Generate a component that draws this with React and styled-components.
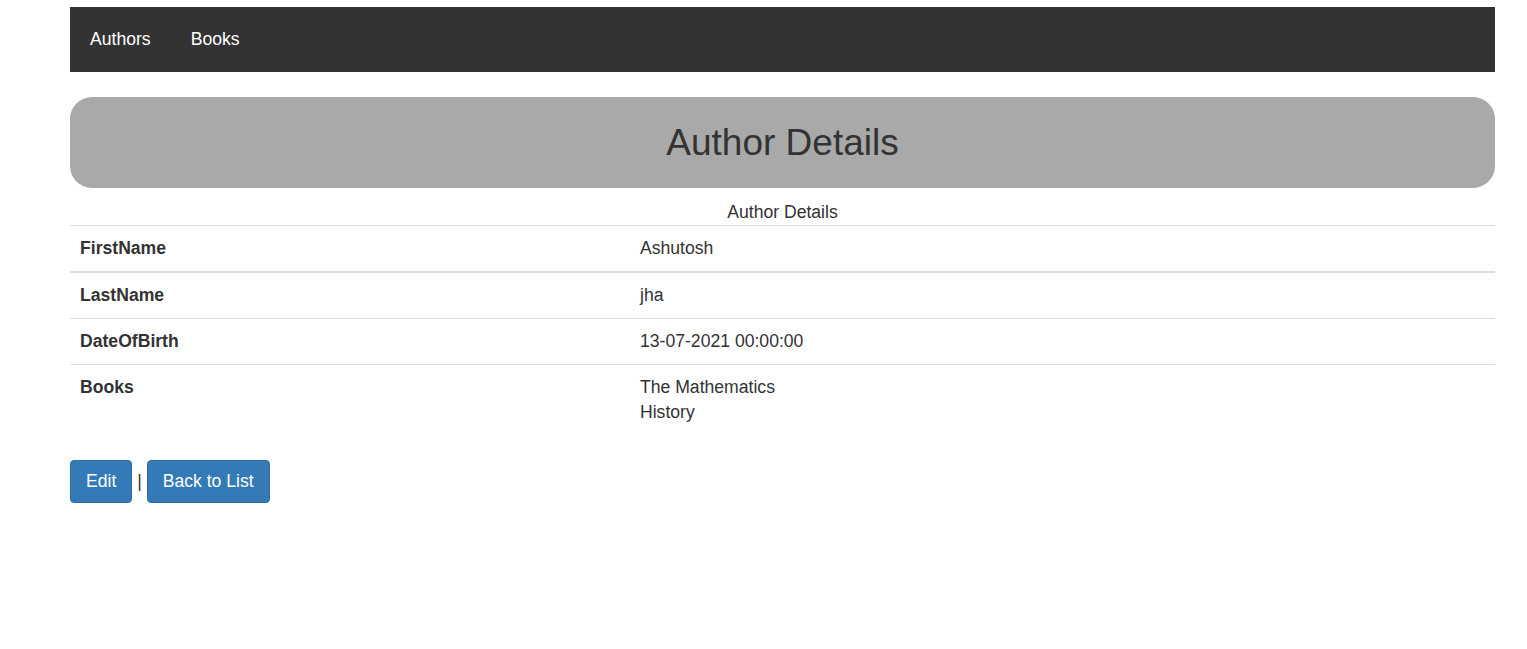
import React from "react";
import styled, { createGlobalStyle } from "styled-components";

const GlobalStyle = createGlobalStyle`
  body {
    margin: 0;
    background: #fff;
    font-family: "Liberation Sans", Arial, Helvetica, sans-serif;
    font-size: 17.6px;
    line-height: 25px;
    color: #333;
  }
`;

const Container = styled.div`
  width: 1425px;
  margin: 7px 0 0 70px;
`;

const Navbar = styled.nav`
  display: flex;
  background-color: #333;
  height: 65px;
`;

const NavLink = styled.a`
  display: block;
  padding: 20px;
  color: #fff;
  text-decoration: none;
  line-height: 25px;
`;

const PageHeader = styled.div`
  margin-top: 25px;
  background-color: #a9a9a9;
  border-radius: 22px;
  padding: 25px 0;
  text-align: center;
`;

const Title = styled.h1`
  margin: 0;
  font-size: 37px;
  font-weight: normal;
  line-height: 41px;
  color: #333;
`;

const Table = styled.table`
  width: 100%;
  border-collapse: collapse;
  margin-bottom: 25px;
`;

const Caption = styled.caption`
  padding: 12px 0 0;
  text-align: center;
  color: #333;
`;

const Row = styled.tr`
  border-top: 1px solid #ddd;
  border-bottom: ${(p) => (p.head ? "2px solid #ddd" : "none")};
`;

const Label = styled.th`
  width: 540px;
  padding: 10px;
  text-align: left;
  vertical-align: top;
  font-weight: bold;
`;

const Value = styled.td`
  padding: 10px;
  vertical-align: top;
`;

const Actions = styled.div`
  color: #333;
`;

const Button = styled.a`
  display: inline-block;
  padding: 8px 15px;
  line-height: 25px;
  color: #fff;
  background-color: #337ab7;
  border: 1px solid #2e6da4;
  border-radius: 4px;
  text-decoration: none;
`;

const details = [
  { label: "FirstName", value: ["Ashutosh"], head: true },
  { label: "LastName", value: ["jha"] },
  { label: "DateOfBirth", value: ["13-07-2021 00:00:00"] },
  { label: "Books", value: ["The Mathematics", "History"] },
];

export default function App() {
  return (
    <>
      <GlobalStyle />
      <Container>
        <Navbar>
          <NavLink href="#">Authors</NavLink>
          <NavLink href="#">Books</NavLink>
        </Navbar>
        <PageHeader>
          <Title>Author Details</Title>
        </PageHeader>
        <Table>
          <Caption>Author Details</Caption>
          <tbody>
            {details.map((d) => (
              <Row key={d.label} head={d.head}>
                <Label>{d.label}</Label>
                <Value>
                  {d.value.map((v) => (
                    <div key={v}>{v}</div>
                  ))}
                </Value>
              </Row>
            ))}
          </tbody>
        </Table>
        <Actions>
          <Button href="#">Edit</Button> | <Button href="#">Back to List</Button>
        </Actions>
      </Container>
    </>
  );
}
